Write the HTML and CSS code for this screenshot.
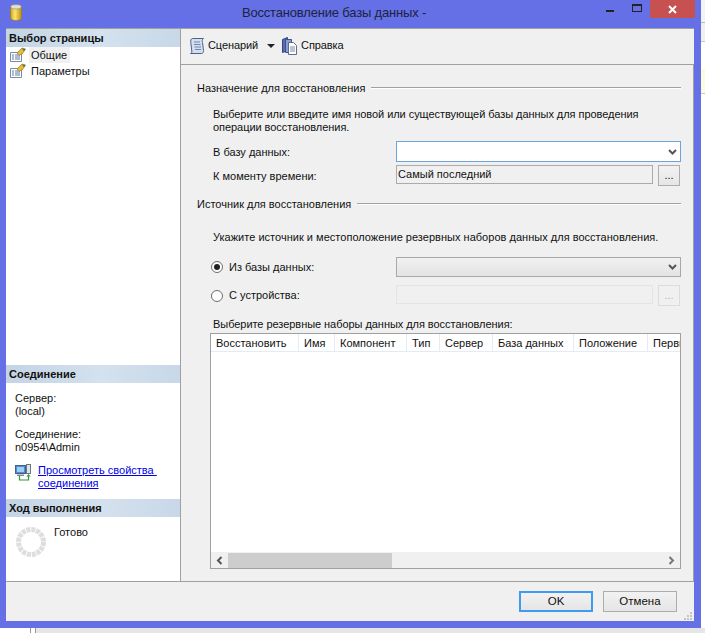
FILE: index.html
```html
<!DOCTYPE html>
<html lang="ru">
<head>
<meta charset="utf-8">
<title>Восстановление базы данных</title>
<link rel="stylesheet" href="styles.css">
</head>
<body>
<div class="desktop">
  <div class="window">
    <header class="titlebar">
      <svg class="app-icon" width="12" height="17" viewBox="0 0 12 17"><defs><linearGradient id="db" x1="0" x2="1" y1="0" y2="0"><stop offset="0" stop-color="#c9a21e"/><stop offset=".4" stop-color="#ffe56e"/><stop offset="1" stop-color="#b98f10"/></linearGradient></defs><path d="M.5 3v11c0 1.4 2.4 2.5 5.500 2.500s5.500-1.100 5.500-2.500V3z" fill="url(#db)" stroke="#9a7c18" stroke-width=".6"/><ellipse cx="6" cy="2.800" rx="5.300" ry="2.200" fill="#dfe0d8" stroke="#8a8a70" stroke-width=".6"/></svg>
      <h1 class="title">Восстановление базы данных -</h1>
      <div class="controls">
        <span class="min"></span>
        <span class="max"></span>
        <span class="close"><svg width="9" height="9" viewBox="0 0 9 9"><path d="M1 1l7 7M8 1L1 8" stroke="#fff" stroke-width="2"/></svg></span>
      </div>
    </header>
    <div class="client">
      <div class="main">
        <aside class="side">
          <div class="side-head">Выбор страницы</div>
          <ul class="nav">
            <li class="nav-item">
              <svg class="nav-icon" width="16" height="16" viewBox="0 0 16 16"><path d="M.5 5.500h11v9H.5z" fill="#fff" stroke="#7c8aa0"/><path d="M2 8h2M5 8h5M2 10h2M5 10h5M2 12h2M5 12h5" stroke="#5878a8"/><path d="M7 6l5-5 3.500 1-3 4.500-3.500 2z" fill="#e9b93c" stroke="#8a6a20" stroke-width=".6"/><path d="M12 1.500l3.500.5-1.500 2.500z" fill="#5c7a3a"/></svg>
              <span class="nav-label selected">Общие</span>
            </li>
            <li class="nav-item">
              <svg class="nav-icon" width="16" height="16" viewBox="0 0 16 16"><path d="M.5 5.500h11v9H.5z" fill="#fff" stroke="#7c8aa0"/><path d="M2 8h2M5 8h5M2 10h2M5 10h5M2 12h2M5 12h5" stroke="#5878a8"/><path d="M7 6l5-5 3.500 1-3 4.500-3.500 2z" fill="#e9b93c" stroke="#8a6a20" stroke-width=".6"/><path d="M12 1.500l3.500.5-1.500 2.500z" fill="#5c7a3a"/></svg>
              <span class="nav-label">Параметры</span>
            </li>
          </ul>
          <div class="side-head">Соединение</div>
          <div class="conn">
            <p class="conn-block">Сервер:<br>(local)</p>
            <p class="conn-block">Соединение:<br>n0954\Admin</p>
            <div class="conn-link">
              <svg width="17" height="17" viewBox="0 0 17 17"><rect x=".5" y="1.500" width="10" height="8" fill="#4a90d8" stroke="#49607e"/><rect x="2" y="3" width="7" height="5" fill="#9ed0f5"/><path d="M2 10.500h7v1.500H2z" fill="#7d8a9c"/><rect x="11.500" y=".5" width="4" height="9" fill="#dfe3ea" stroke="#6d7787"/><path d="M4.500 12v4h9v-4" fill="none" stroke="#2e9a2e" stroke-width="1.200"/><path d="M11.500 12.500l2-2.500 2 2.500z" fill="#2e9a2e"/></svg>
              <a class="link" href="#">Просмотреть свойства&nbsp; соединения</a>
            </div>
          </div>
          <div class="side-head">Ход выполнения</div>
          <div class="progress">
            <svg class="spinner" width="32" height="32" viewBox="0 0 32 32"><circle cx="16" cy="16" r="12.500" fill="none" stroke="#dedede" stroke-width="5" stroke-dasharray="4 .9"/></svg>
            <span class="progress-text">Готово</span>
          </div>
        </aside>
        <section class="content">
          <div class="toolbar">
            <button class="tool" type="button">
              <svg width="16" height="18" viewBox="0 0 16 18"><path d="M3.500 1.500h11c-1.500 1-1.500 2.500-1 4l1 8c.3 2-1 3-2 3h-11c1 0 1.500-1 1.300-2.500l-1-8.500C1.500 3.500 2 1.500 3.500 1.500z" fill="#d3dfee" stroke="#4b648a"/><path d="M5 5h6M5 7.500h6.500M5.500 10h6.500M6 12.500h6" stroke="#6f88ac"/></svg>
              <span>Сценарий</span>
            </button>
            <span class="caret"></span>
            <button class="tool" type="button">
              <svg width="16" height="18" viewBox="0 0 16 18"><path d="M.5 2.500l5-2v13l-5 2z" fill="#5a6fb0" stroke="#33457f"/><path d="M3.500 2.500h6v13h-6z" fill="#8e9dd0" stroke="#3f5190"/><path d="M6.500 5.500h5l3 3v9h-8z" fill="#fff" stroke="#5c6c8c"/><path d="M8 10h5M8 12h5M8 14h5" stroke="#7b8aa8"/></svg>
              <span>Справка</span>
            </button>
          </div>
          <div class="form">
            <div class="group-head"><span>Назначение для восстановления</span><i class="rule"></i></div>
            <p class="hint">Выберите или введите имя новой или существующей базы данных для проведения операции восстановления.</p>
            <div class="fields first-fields">
              <div class="row">
                <span class="row-label">В базу данных:</span>
                <div class="combo active"><svg class="chev" width="9" height="6" viewBox="0 0 9 6"><path d="M1 1l3.500 3.500L8 1" fill="none" stroke="#555" stroke-width="2"/></svg></div>
              </div>
              <div class="row">
                <span class="row-label">К моменту времени:</span>
                <div class="pair">
                  <div class="textbox">Самый последний</div>
                  <button class="dots" type="button">...</button>
                </div>
              </div>
            </div>
            <div class="group-head second"><span>Источник для восстановления</span><i class="rule"></i></div>
            <p class="hint single">Укажите источник и местоположение резервных наборов данных для восстановления.</p>
            <div class="fields source-fields">
              <div class="row">
                <label class="radio-label"><span class="radio on"></span><span class="radio-text">Из базы данных:</span></label>
                <div class="combo readonly"><svg class="chev" width="9" height="6" viewBox="0 0 9 6"><path d="M1 1l3.500 3.500L8 1" fill="none" stroke="#555" stroke-width="2"/></svg></div>
              </div>
              <div class="row">
                <label class="radio-label"><span class="radio"></span>С устройства:</label>
                <div class="pair">
                  <div class="textbox off"></div>
                  <button class="dots off" type="button">...</button>
                </div>
              </div>
            </div>
            <p class="hint grid-title">Выберите резервные наборы данных для восстановления:</p>
            <div class="table">
              <div class="thead">
                <span class="th c1">Восстановить</span>
                <span class="th c2">Имя</span>
                <span class="th c3">Компонент</span>
                <span class="th c4">Тип</span>
                <span class="th c5">Сервер</span>
                <span class="th c6">База данных</span>
                <span class="th c7">Положение</span>
                <span class="th c8">Первый</span>
              </div>
              <div class="tbody"></div>
              <div class="hscroll">
                <svg class="arrow" width="7" height="9" viewBox="0 0 7 9"><path d="M5.500 1L2 4.500 5.500 8" fill="none" stroke="#555" stroke-width="2"/></svg>
                <span class="thumb"></span>
                <svg class="arrow end" width="7" height="9" viewBox="0 0 7 9"><path d="M1.500 1L5 4.500 1.500 8" fill="none" stroke="#777" stroke-width="2"/></svg>
              </div>
            </div>
          </div>
        </section>
      </div>
      <footer class="footer">
        <button class="btn default" type="button">OK</button>
        <button class="btn" type="button">Отмена</button>
        <svg class="grip" width="9" height="9" viewBox="0 0 9 9"><path d="M6 0h2v2H6zM3 3h2v2H3zM6 3h2v2H6zM0 6h2v2H0zM3 6h2v2H3zM6 6h2v2H6z" fill="#c4c4c4"/></svg>
      </footer>
    </div>
  </div>
  <div class="strip-right">
    <i class="s-a"></i><i class="s-b"></i><i class="s-c"></i><i class="s-d"></i><i class="s-e"></i>
  </div>
  <div class="strip-bottom"><i class="s-white"></i><i class="s-gap"></i><i class="s-grey"></i></div>
</div>
</body>
</html>
```

FILE: styles.css
```css
* { box-sizing: border-box; }
html, body { margin: 0; padding: 0; background: #fff; }
body {
  width: 705px;
  height: 633px;
  overflow: hidden;
  font-family: "Liberation Sans", Arial, sans-serif;
  font-size: 11px;
  line-height: 13px;
  color: #111;
}
p, ul, h1 { margin: 0; padding: 0; }
button { font: inherit; color: inherit; }

.desktop {
  display: grid;
  grid-template-columns: 701px 4px;
  grid-template-rows: 628px 5px;
  width: 705px;
  height: 633px;
}

.window {
  display: flex;
  flex-direction: column;
  background: #6570e6;
  padding: 0 7px 7px 6px;
}
.titlebar {
  display: flex;
  height: 28px;
  flex: none;
  position: relative;
}
.app-icon { margin: 4px 0 0 4px; }
.title {
  position: absolute;
  left: 0;
  right: 0;
  top: 3px;
  padding-right: 32px;
  text-align: center;
  font-size: 13px;
  letter-spacing: -.18px;
  line-height: 19px;
  font-weight: 400;
  color: #1c2340;
  font-family: "Liberation Sans", sans-serif;
}
.controls {
  margin-left: auto;
  display: flex;
  align-items: flex-start;
  position: relative;
  margin-right: -1px;
}
.min { width: 8px; height: 2px; background: #222; margin: 10px 18px 0 0; }
.max { width: 10px; height: 8px; border: 1px solid #222; border-top-width: 2px; margin: 4px 8px 0 0; }
.close {
  width: 45px;
  height: 18px;
  background: #c75050;
  display: flex;
  align-items: center;
  justify-content: center;
}

.client {
  flex: 1;
  display: flex;
  flex-direction: column;
  background: #f0f0f0;
  min-height: 0;
}
.main {
  flex: 1;
  display: flex;
  min-height: 0;
  border-top: 1px solid #a0a0a0;
  border-bottom: 1px solid #a0a0a0;
}

.side {
  width: 175px;
  flex: none;
  display: flex;
  flex-direction: column;
  background: #fff;
  border-right: 1px solid #a0a0a0;
}
.side-head {
  flex: none;
  height: 18px;
  padding-left: 3px;
  line-height: 18px;
  font-weight: 700;
  background: linear-gradient(90deg, #c3d4e4 0%, #d4e1ee 55%, #c8d8e8 100%);
}
.nav {
  list-style: none;
  flex: none;
  height: 318px;
}
.nav-item {
  display: flex;
  height: 16px;
  align-items: center;
  padding-left: 4px;
}
.nav-icon { flex: none; margin-right: 3px; }
.nav-label { padding: 0 2px; line-height: 16px; }
.nav-label.selected { background: #f0f0f0; padding-right: 3px; }

.conn { flex: none; height: 116px; padding: 9px 0 0 9px; }
.conn-block { margin-bottom: 10px; }
.conn-link { display: flex; gap: 6px; align-items: flex-start; margin-top: 2px; }
.link { color: #0000e8; text-decoration: underline; flex: 1; padding-right: 14px; }

.progress { position: relative; flex: 1; display: flex; padding: 9px 0 0 48px; }
.spinner { position: absolute; left: 9px; top: 9px; }
.progress-text { display: block; }

.content { flex: 1; display: flex; flex-direction: column; min-width: 0; }
.toolbar {
  flex: none;
  height: 36px;
  display: flex;
  align-items: center;
  padding: 0 0 2px 8px;
  border-bottom: 1px solid #a0a0a0;
}
.tool {
  display: flex;
  align-items: center;
  gap: 3px;
  border: 0;
  background: none;
  padding: 0;
  letter-spacing: -.1px;
}
.caret {
  width: 0;
  height: 0;
  border-left: 4px solid transparent;
  border-right: 4px solid transparent;
  border-top: 4px solid #222;
  margin: 0 7px 0 9px;
}

.form {
  flex: 1;
  padding: 16px 12px 0 16px;
  border-right: 1px solid #a0a0a0;
  min-height: 0;
}
.group-head {
  display: flex;
  align-items: center;
  gap: 6px;
  height: 14px;
}
.group-head.second { margin-top: 11px; }
.rule {
  flex: 1;
  height: 2px;
  border-top: 1px solid #a0a0a0;
  border-bottom: 1px solid #fff;
  margin-top: -1px;
}
.hint { margin: 13px 0 0 16px; width: 450px; letter-spacing: -.05px; }
.hint.single { margin-top: 20px; width: 470px; letter-spacing: .02px; }
.hint.grid-title { margin: 12px 0 2px 16px; height: 13px; }

.fields { display: flex; flex-direction: column; margin-left: 16px; }
.first-fields { margin-top: 7px; gap: 3px; }
.source-fields { margin-top: 12px; gap: 8px; }
.row {
  display: grid;
  grid-template-columns: 183px 285px;
  align-items: center;
  height: 21px;
}
.row-label { padding-top: 1px; }

.combo {
  height: 21px;
  display: flex;
  align-items: center;
  justify-content: flex-end;
  padding-right: 3px;
  border: 1px solid #a8a8a8;
}
.combo.active { background: #fff; border-color: #6fa3dc; }
.combo.readonly { background: linear-gradient(#f1f1f1, #e3e3e3); height: 20px; }

.pair { display: flex; align-items: flex-start; gap: 5px; height: 21px; }
.textbox {
  width: 257px;
  height: 19px;
  border: 1px solid #ababab;
  padding-left: 1px;
  line-height: 17px;
}
.textbox.off { border-color: #e4e4e4; }
.dots {
  width: 22px;
  height: 21px;
  padding: 0;
  border: 1px solid #adadad;
  background: linear-gradient(#f2f2f2, #e6e6e6);
  line-height: 19px;
}
.dots.off { color: #b5b5b5; border-color: #dcdcdc; background: #f0f0f0; }

.radio-label { display: flex; align-items: center; margin-left: -2px; gap: 6px; }
.radio-text { padding-top: 2px; }
.radio {
  width: 12px;
  height: 12px;
  flex: none;
  border-radius: 50%;
  border: 1px solid #6d6d6d;
  background: #fff;
  position: relative;
  display: flex;
  align-items: center;
  justify-content: center;
}
.radio.on::after {
  content: "";
  width: 6px;
  height: 6px;
  border-radius: 50%;
  background: #222;
}

.table {
  margin-left: 13px;
  width: 471px;
  height: 236px;
  display: flex;
  flex-direction: column;
  border: 1px solid #a0a0a0;
  background: #fff;
  overflow: hidden;
}
.thead {
  flex: none;
  display: flex;
  height: 18px;
  border-bottom: 1px solid #e3ecf5;
}
.th {
  flex: none;
  padding-left: 5px;
  line-height: 18px;
  border-right: 1px solid #e3ecf5;
  white-space: nowrap;
  overflow: hidden;
}
.c1 { width: 88px; }
.c2 { width: 36px; }
.c3 { width: 72px; }
.c4 { width: 33px; }
.c5 { width: 53px; }
.c6 { width: 81px; }
.c7 { width: 74px; }
.c8 { width: 33px; border-right: 0; }
.tbody { flex: 1; }
.hscroll {
  flex: none;
  height: 16px;
  display: flex;
  align-items: center;
  background: #f0f0f0;
}
.arrow { flex: none; margin-left: 5px; }
.thumb { width: 164px; height: 15px; background: #cdcdcd; margin-left: 5px; }
.arrow.end { margin: 0 5px 0 auto; }

.footer {
  flex: none;
  height: 39px;
  display: flex;
  justify-content: flex-end;
  align-items: flex-start;
  padding: 9px 17px 0 0;
  gap: 10px;
  position: relative;
}
.btn {
  width: 74px;
  height: 21px;
  padding: 0;
  border: 1px solid #adadad;
  background: linear-gradient(#f2f2f2, #e5e5e5);
  font-size: 11.500px;
}
.btn.default { border: 2px solid #3f9bf0; }
.grip { position: absolute; right: 1px; bottom: 0; }

.strip-right { display: flex; flex-direction: column; background: #fff; }
.strip-right i { display: block; }
.s-a { height: 23px; background: #f3f3f3; border-bottom: 1px solid #bcbcbc; }
.s-b { height: 19px; background: #f0f0f0; border-bottom: 1px solid #c4c4c4; }
.s-c { height: 27px; background: #fff; }
.s-d { height: 25px; background: #fbfbe0; border-bottom: 1px solid #c8c8c8; }
.s-e { flex: 1; background: #fff; }

.strip-bottom { grid-column: 1 / -1; display: flex; }
.strip-bottom i { display: block; height: 100%; }
.s-white { width: 31px; background: #fff; border-right: 1px solid #9a9a9a; }
.s-gap { width: 5px; background: #fff; border-right: 1px solid #9a9a9a; }
.s-grey { flex: 1; background: #e6e6e6; }
```
